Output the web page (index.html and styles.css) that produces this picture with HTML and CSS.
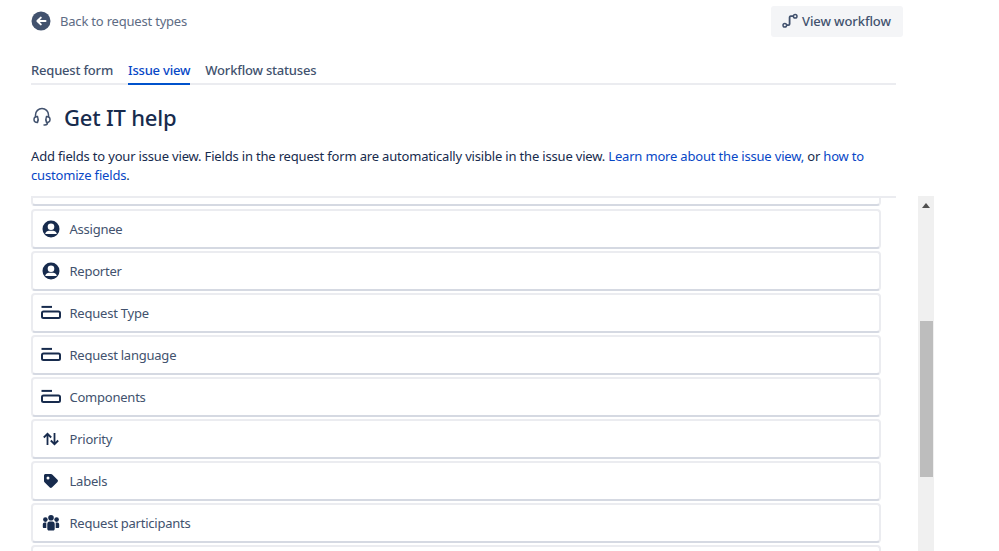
FILE: index.html
```html
<!DOCTYPE html>
<html lang="en">
<head>
<meta charset="utf-8">
<title>Get IT help</title>
<link rel="stylesheet" href="styles.css">
</head>
<body>
<div class="page">
  <header class="topbar">
    <a class="back">
      <svg class="back-icon" width="20" height="20" viewBox="0 0 20 20"><circle cx="10" cy="10" r="9.500" fill="#42526e"/><path d="M14.500 10H6.500M9.800 6.600 6.400 10l3.400 3.400" fill="none" stroke="#fff" stroke-width="2" stroke-linecap="round" stroke-linejoin="round"/></svg>
      <span>Back to request types</span>
    </a>
    <button class="workflow">
      <svg width="16" height="16" viewBox="0 0 16 16" fill="none" stroke="#42526e" stroke-width="1.500"><circle cx="2.800" cy="12.200" r="1.800"/><circle cx="13.200" cy="3.200" r="1.800"/><path d="M4.600 12.200H6.400C7.200 12.200 7.600 11.800 7.600 11V4.600C7.600 3.800 8 3.200 8.800 3.200H11.400" stroke-width="1.800"/></svg>
      <span>View workflow</span>
    </button>
  </header>
  <nav class="tabs">
    <a class="tab">Request form</a>
    <a class="tab active">Issue view</a>
    <a class="tab">Workflow statuses</a>
  </nav>
  <div class="title">
    <svg width="22" height="22" viewBox="0 0 22 22" fill="none" stroke="#42526e" stroke-width="1.500"><path d="M4.500 11.500V9a6.500 6.500 0 0 1 13 0v2.500"/><path d="M6.500 10.500c-2 0-3.500 1-3.500 3s1.500 3 3.500 3c.8-1.800.8-4.200 0-6ZM15.500 10.500c2 0 3.500 1 3.500 3s-1.500 3-3.500 3c-.8-1.800-.8-4.200 0-6Z"/><path d="M16.500 16.500c0 1.500-1 2.500-2.500 2.500h-1.500"/></svg>
    <h1>Get IT help</h1>
  </div>
  <p class="intro">Add fields to your issue view. Fields in the request form are automatically visible in the issue view. <a>Learn more about the issue view,</a> or <a>how to customize fields</a>.</p>
  <div class="rule"></div>
  <div class="fields-area">
    <div class="fields">
      <div class="card stub"></div>
      <div class="card"><svg class="ico" width="20" height="20" viewBox="0 0 20 20"><use href="#i-user"/></svg><span>Assignee</span></div>
      <div class="card"><svg class="ico" width="20" height="20" viewBox="0 0 20 20"><use href="#i-user"/></svg><span>Reporter</span></div>
      <div class="card"><svg class="ico" width="20" height="20" viewBox="0 0 20 20"><use href="#i-field"/></svg><span>Request Type</span></div>
      <div class="card"><svg class="ico" width="20" height="20" viewBox="0 0 20 20"><use href="#i-field"/></svg><span>Request language</span></div>
      <div class="card"><svg class="ico" width="20" height="20" viewBox="0 0 20 20"><use href="#i-field"/></svg><span>Components</span></div>
      <div class="card"><svg class="ico" width="20" height="20" viewBox="0 0 20 20"><path d="M6.500 16V5M2.800 8.500 6.500 4.800l3.700 3.700M13.500 4v11M9.800 11.500l3.700 3.700 3.700-3.700" fill="none" stroke="#172b4d" stroke-width="1.800"/></svg><span>Priority</span></div>
      <div class="card"><svg class="ico" width="20" height="20" viewBox="0 0 20 20"><path d="M3 4.500C3 3.700 3.700 3 4.500 3H10c.5 0 .9.200 1.200.5l5.300 5.300c.6.600.6 1.500 0 2.100l-5.600 5.600c-.6.600-1.500.6-2.100 0L3.500 11.200C3.200 10.900 3 10.500 3 10Z" fill="#172b4d"/><circle cx="7" cy="7" r="1.500" fill="#fff"/></svg><span>Labels</span></div>
      <div class="card"><svg class="ico" width="20" height="20" viewBox="0 0 20 20" fill="#172b4d"><circle cx="10" cy="4.800" r="2.800"/><circle cx="4.400" cy="6.600" r="2.300"/><circle cx="15.600" cy="6.600" r="2.300"/><path d="M6.300 11c0-1.500 1-2.600 2.300-2.600h2.800c1.300 0 2.300 1.100 2.300 2.600v5c0 .8-.7 1.500-1.500 1.500H7.800c-.8 0-1.500-.7-1.500-1.500Z"/><path d="M5.300 9.400V15H2.800c-.6 0-1-.5-1-1v-2.600c0-1.100.8-2 1.800-2ZM14.700 9.400V15h2.500c.6 0 1-.5 1-1v-2.600c0-1.100-.8-2-1.800-2Z"/></svg><span>Request participants</span></div>
      <div class="card"></div>
    </div>
    <div class="scrollbar">
      <div class="arrow"></div>
      <div class="thumb"></div>
    </div>
  </div>
</div>
<svg class="defs" width="0" height="0">
  <symbol id="i-user" viewBox="0 0 20 20"><circle cx="10" cy="10" r="8.500" fill="#172b4d"/><circle cx="10" cy="7.800" r="3.300" fill="#fff"/><path d="M4.300 14.500c.6-1.800 2-2.700 3.600-2.700h4.200c1.600 0 3 .9 3.600 2.700v.5H4.300Z" fill="#fff"/><path d="M4.500 15h11c-1.300 1.700-3.300 3-5.500 3s-4.200-1.300-5.500-3Z" fill="#172b4d"/></symbol>
  <symbol id="i-field" viewBox="0 0 20 20"><path d="M0.500 3.900h10.500" stroke="#172b4d" stroke-width="2" fill="none"/><rect x="1" y="8.500" width="18" height="6.500" rx="1.500" fill="none" stroke="#172b4d" stroke-width="2"/></symbol>
</svg>
</body>
</html>
```
FILE: styles.css
```css
* { box-sizing: border-box; }
html, body { margin: 0; height: 100%; overflow: hidden; background: #fff; }
body { font-family: "Noto Sans", "Open Sans", sans-serif; font-size: 13px; letter-spacing: -0.2px; color: #172b4d; }
.page { height: 551px; display: flex; flex-direction: column; padding: 5px 0 0 31px; }
.topbar { display: flex; align-items: center; justify-content: space-between; width: 872px; height: 32px; }
.back { display: flex; align-items: center; gap: 9px; color: #5e6c84; }
.back-icon { display: block; }
.workflow { display: flex; align-items: center; align-self: flex-end; gap: 4px; height: 31px; width: 132px; padding: 0 0 2px 11px; border: 0; border-radius: 3px; background: #f4f5f7; color: #42526e; font: 500 13px "Noto Sans", sans-serif; letter-spacing: -0.1px; }
.tabs { display: flex; gap: 15px; width: 865px; height: 31px; margin-top: 17px; border-bottom: 2px solid #ebecf0; }
.tab { height: 31px; padding-top: 7px; line-height: 18px; font-weight: 500; color: #42526e; }
.tab.active { color: #0747c6; border-bottom: 2px solid #0052cc; }
.title { display: flex; align-items: center; gap: 11px; height: 30px; margin-top: 17px; }
h1 { margin: 0; font-size: 22px; letter-spacing: -0.2px; font-weight: 500; line-height: 30px; color: #172b4d; }
.intro { width: 865px; margin: 15px 0 0; line-height: 19px; letter-spacing: -0.18px; color: #172b4d; }
.intro a { color: #0747c6; }
.rule { width: 865px; height: 2px; margin-top: 11px; background: #ebecf0; flex: none; }
.fields-area { display: flex; flex: 1; min-height: 0; }
.fields { width: 850px; height: 355px; display: flex; flex-direction: column; gap: 2px; overflow: hidden; flex: none; }
.card { flex: none; height: 40px; display: flex; align-items: center; gap: 8.500px; padding: 0 8px; background: #fff; border: 2px solid #ebecf0; border-bottom-color: #d5d9e2; border-radius: 4px; letter-spacing: -0.23px; color: #42526e; }
.card.stub { height: 8px; margin-bottom: 1px; border-top: 0; border-radius: 0 0 4px 4px; }
.ico { display: block; flex: none; }
.scrollbar { width: 16px; height: 355px; margin: -2px 0 0 37px; background: #f0f0f0; display: flex; flex-direction: column; align-items: center; }
.arrow { width: 0; height: 0; margin-top: 7px; border: 4px solid transparent; border-top: 0; border-bottom: 5px solid #505050; }
.thumb { width: 13px; height: 156px; margin-top: 113px; background: #bdbdbd; }
.defs { display: block; }
```
